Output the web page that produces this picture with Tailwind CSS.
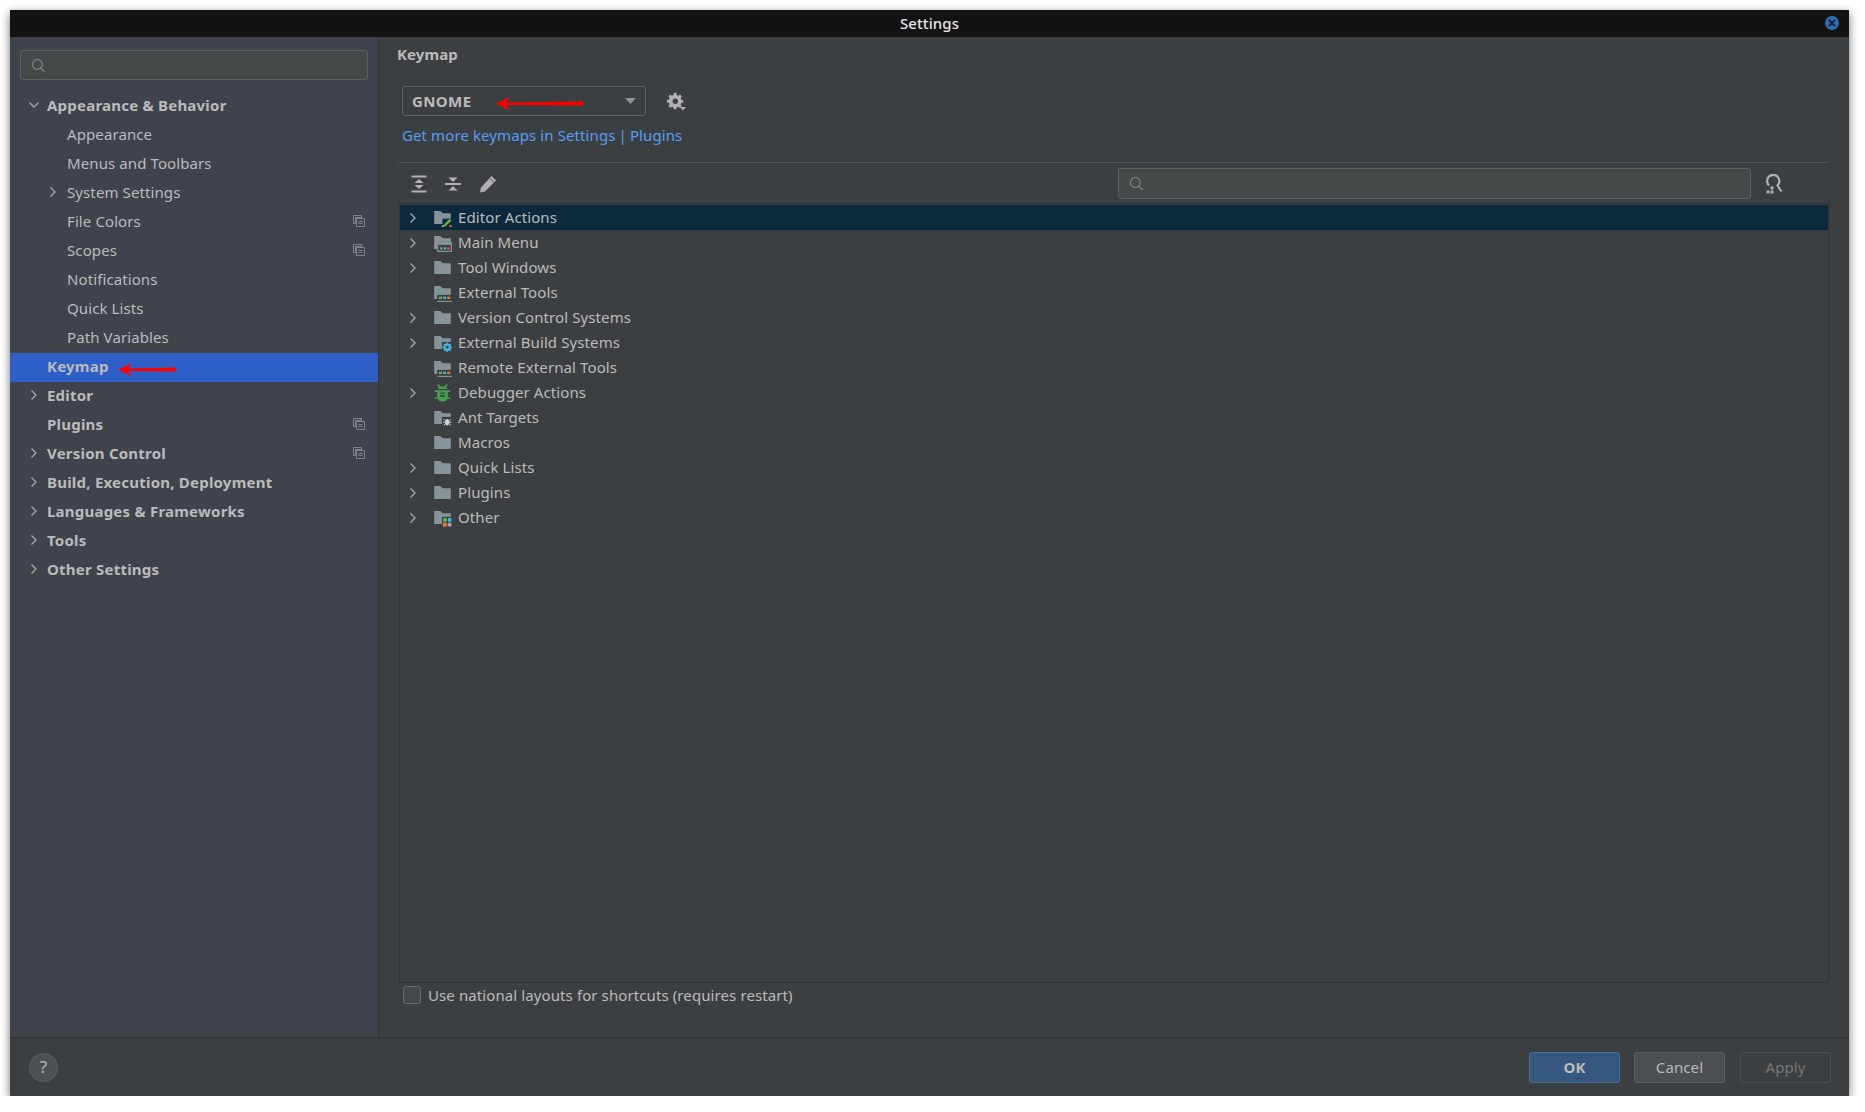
<!DOCTYPE html>
<html lang="en">
<head>
    <meta charset="UTF-8">
    <title>Settings</title>
    <script src="https://cdn.jsdelivr.net/npm/@tailwindcss/browser@4"></script>
</head>
<body class="bg-white font-['Noto_Sans',sans-serif] text-[15px] tracking-[0.1px] text-[#bbbbbb]">

    <!-- shared icons -->
    <svg class="hidden">
        <symbol id="right" viewBox="0 0 12 12"><path d="M3.5 1.5 8 6l-4.5 4.5" fill="none" stroke="#a9a9a9" stroke-width="1.3"/></symbol>
        <symbol id="down" viewBox="0 0 12 12"><path d="M1.5 3.5 6 8l4.5-4.5" fill="none" stroke="#a9a9a9" stroke-width="1.3"/></symbol>
        <symbol id="folder" viewBox="0 0 16 16"><path d="M1 2.5h5.2l2 2H15V13.5H1z" fill="#87939a"/></symbol>
        <symbol id="search" viewBox="0 0 16 16"><circle cx="6.8" cy="6.8" r="5.2" fill="none" stroke="#8a8d8f" stroke-width="1.1"/><path d="m10.5 10.8 4 4" stroke="#8a8d8f" stroke-width="1.3"/></symbol>
        <symbol id="copy" viewBox="0 0 12 12"><path d="M.5.5h8v2h-6v6h-2z" fill="none" stroke="#7f8589"/><path d="M3.5 3.5h8v8h-8z" fill="none" stroke="#7f8589"/><path d="M5.5 6.5h4M5.5 8.5h4" stroke="#7f8589"/></symbol>
    </svg>

    <div class="flex flex-col ml-[10px] mt-[10px] w-[1839px] h-[1086px] bg-[#3c3f41] shadow-[0_3px_9px_rgba(0,0,0,0.55)]">

        <!-- title bar -->
        <div class="relative flex items-center justify-center h-[27px] bg-[#131313] text-[#e4e4e4] text-[15px] font-medium">
            Settings
            <div class="absolute right-[10px] top-[6px] flex items-center justify-center w-[14px] h-[14px] rounded-full bg-[#2f6db5]">
                <svg class="w-[8px] h-[8px]" viewBox="0 0 8 8"><path d="m1 1 6 6M7 1 1 7" stroke="#15233a" stroke-width="1.8"/></svg>
            </div>
        </div>

        <div class="flex flex-1 min-h-0">

            <!-- sidebar -->
            <div class="w-[369px] shrink-0 bg-[#3e434c] border-r border-[#323232]">
                <div class="flex items-center mx-[10px] mt-[13px] mb-[12px] h-[30px] px-[10px] rounded-[3px] bg-[#45494a] border border-[#5e6163]">
                    <svg class="w-[15px] h-[15px]"><use href="#search"/></svg>
                </div>

                <div class="flex items-center h-[29px] pb-[3px] pl-[18px] font-bold tracking-[0.22px]"><svg class="w-[12px] h-[12px] mr-[7px]"><use href="#down"/></svg>Appearance &amp; Behavior</div>
                <div class="flex items-center h-[29px] pb-[3px] pl-[57px]">Appearance</div>
                <div class="flex items-center h-[29px] pb-[3px] pl-[57px]">Menus and Toolbars</div>
                <div class="flex items-center h-[29px] pb-[3px] pl-[37px]"><svg class="w-[12px] h-[12px] mr-[8px]"><use href="#right"/></svg>System Settings</div>
                <div class="flex items-center h-[29px] pb-[3px] pl-[57px] pr-[13px]">File Colors<svg class="w-[12px] h-[12px] ml-auto"><use href="#copy"/></svg></div>
                <div class="flex items-center h-[29px] pb-[3px] pl-[57px] pr-[13px]">Scopes<svg class="w-[12px] h-[12px] ml-auto"><use href="#copy"/></svg></div>
                <div class="flex items-center h-[29px] pb-[3px] pl-[57px]">Notifications</div>
                <div class="flex items-center h-[29px] pb-[3px] pl-[57px]">Quick Lists</div>
                <div class="flex items-center h-[29px] pb-[3px] pl-[57px]">Path Variables</div>
                <div class="relative flex items-center h-[29px] pb-[3px] pl-[37px] font-bold tracking-[0.22px] bg-[#2d5fc6]">
                    Keymap
                    <svg class="absolute left-[108px] top-[10px] w-[58px] h-[13px]" viewBox="0 0 58 13"><path d="M0 6.5 14 0l-4 5.5 48-1v4l-48-.5 4 5.5z" fill="#ff0000"/></svg>
                </div>
                <div class="flex items-center h-[29px] pb-[3px] pl-[18px] font-bold tracking-[0.22px]"><svg class="w-[12px] h-[12px] mr-[7px]"><use href="#right"/></svg>Editor</div>
                <div class="flex items-center h-[29px] pb-[3px] pl-[37px] pr-[13px] font-bold tracking-[0.22px]">Plugins<svg class="w-[12px] h-[12px] ml-auto"><use href="#copy"/></svg></div>
                <div class="flex items-center h-[29px] pb-[3px] pl-[18px] pr-[13px] font-bold tracking-[0.22px]"><svg class="w-[12px] h-[12px] mr-[7px]"><use href="#right"/></svg>Version Control<svg class="w-[12px] h-[12px] ml-auto"><use href="#copy"/></svg></div>
                <div class="flex items-center h-[29px] pb-[3px] pl-[18px] font-bold tracking-[0.22px]"><svg class="w-[12px] h-[12px] mr-[7px]"><use href="#right"/></svg>Build, Execution, Deployment</div>
                <div class="flex items-center h-[29px] pb-[3px] pl-[18px] font-bold tracking-[0.22px]"><svg class="w-[12px] h-[12px] mr-[7px]"><use href="#right"/></svg>Languages &amp; Frameworks</div>
                <div class="flex items-center h-[29px] pb-[3px] pl-[18px] font-bold tracking-[0.22px]"><svg class="w-[12px] h-[12px] mr-[7px]"><use href="#right"/></svg>Tools</div>
                <div class="flex items-center h-[29px] pb-[3px] pl-[18px] font-bold tracking-[0.22px]"><svg class="w-[12px] h-[12px] mr-[7px]"><use href="#right"/></svg>Other Settings</div>
            </div>

            <!-- main panel -->
            <div class="flex flex-col flex-1 min-w-0 pr-[20px]">
                <div class="flex items-center h-[38px] pb-[3px] pl-[18px] font-bold">Keymap</div>

                <div class="flex items-center mt-[11px] pl-[23px]">
                    <div class="relative flex items-center w-[244px] h-[30px] pl-[9px] pr-[9px] rounded-[3px] border border-[#5e6163] font-bold tracking-[0.4px]">
                        GNOME
                        <svg class="absolute left-[93px] top-[10px] w-[87px] h-[13px]" viewBox="0 0 87 13"><path d="M0 6.5 14 0l-4 5.5 77-1v4l-77-.5 4 5.5z" fill="#ff0000"/></svg>
                        <svg class="ml-auto w-[11px] h-[6px]" viewBox="0 0 11 6"><path d="M0 0h11L5.5 6z" fill="#8f9193"/></svg>
                    </div>
                    <svg class="ml-[21px] mt-[2px] w-[20px] h-[20px]" viewBox="0 0 20 20">
                        <path d="M8 1h3l.5 2.500 1.700.8L15.400 3l2 2.100-1.300 2.100.7 1.800 2.200.5v3l-2.300.5-.7 1.700 1.300 2-2.100 2-2.100-1.300-1.700.7-.5 2.200H8l-.5-2.300-1.700-.7-2 1.300-2.100-2 1.300-2.100-.7-1.800L0 12.500v-3l2.300-.5.7-1.800-1.300-2L3.800 3l2 1.300 1.700-.8z" transform="scale(.85)" fill="#afb1b3"/>
                        <circle cx="8.300" cy="9.300" r="2.700" fill="#3c3f41"/>
                        <path d="M13 15h6l-3 3.500z" fill="#afb1b3"/>
                    </svg>
                </div>

                <div class="flex items-center h-[22px] mt-[9px] pb-px pl-[23px] text-[#589df6]">
                    <span>Get more keymaps in Settings</span><span class="mx-[3px]">|</span><span>Plugins</span>
                </div>

                <div class="h-px mt-[15px] ml-[19px] bg-[#515355]"></div>

                <!-- toolbar -->
                <div class="flex items-center h-[40px] pt-px pl-[31px] pr-[45px]">
                    <svg class="w-[18px] h-[18px]" viewBox="0 0 18 18"><path d="M1.500 1.500h15M1.500 16.500h15" stroke="#afb1b3" stroke-width="2"/><path d="M9 4l4.500 4h-9zM9 14l4.500-4h-9z" fill="#afb1b3"/></svg>
                    <svg class="ml-[16px] w-[18px] h-[18px]" viewBox="0 0 18 18"><path d="M1 9h16" stroke="#afb1b3" stroke-width="2"/><path d="M9 7 4.500 2.500h9zM9 11l4.500 4.500h-9z" fill="#afb1b3"/></svg>
                    <svg class="ml-[17px] w-[18px] h-[18px]" viewBox="0 0 18 18"><path d="M12.500 1 17 5.500 6 16.500l-5 1 1-5z" fill="#afb1b3"/><path d="m10.800 3.500 4 4" stroke="#3c3f41" stroke-width=".8"/></svg>
                    <div class="flex items-center ml-auto w-[633px] h-[31px] pl-[10px] rounded-[3px] bg-[#45494a] border border-[#5e6163]">
                        <svg class="w-[15px] h-[15px]"><use href="#search"/></svg>
                    </div>
                    <svg class="ml-[13px] w-[20px] h-[20px]" viewBox="0 0 20 20"><path d="M5 11.500A6.200 6.200 0 1 1 13.500 11.500l4 6" fill="none" stroke="#afb1b3" stroke-width="2.200"/><path d="M6.500 12.500h3v3h-3zM2.500 16.500h3v3h-3zM6.500 16.500h3v3h-3z" fill="#afb1b3"/></svg>
                </div>

                <!-- action tree -->
                <div class="flex-1 min-h-0 ml-[20px] pt-px border border-[#323232]">
                    <div class="flex items-center h-[25px] pl-[7px] bg-[#0d293e]">
                        <svg class="w-[12px] h-[12px]"><use href="#right"/></svg>
                        <svg class="ml-[14px] w-[19px] h-[19px]" viewBox="0 0 16 16"><use href="#folder"/><path d="M8 9h8v7H8z" fill="#0d293e"/><path d="m9 14 5-5 1.500 1.500-5 5z" fill="#62b543"/><path d="M7.500 14.500h2V16h-2z" fill="#d9a343"/><path d="M13.500 14.500H16V16h-2.500z" fill="#e05555"/></svg>
                        <span class="ml-[6px]">Editor Actions</span>
                    </div>
                    <div class="flex items-center h-[25px] pl-[7px]">
                        <svg class="w-[12px] h-[12px]"><use href="#right"/></svg>
                        <svg class="ml-[14px] w-[19px] h-[19px]" viewBox="0 0 16 16"><use href="#folder"/><path d="M3.500 7.500h12.500v8.500H3.500z" fill="#3c3f41"/><path d="M4 8h11.500v7.500H4z" fill="none" stroke="#87939a"/><path d="M4 8h11.500v2H4z" fill="#87939a"/><path d="M6 12h2v2H6z" fill="#62b543"/><path d="M9 12h2v2H9z" fill="#40b6e0"/><path d="M12 12h2v2h-2z" fill="#e05555"/></svg>
                        <span class="ml-[6px]">Main Menu</span>
                    </div>
                    <div class="flex items-center h-[25px] pl-[7px]">
                        <svg class="w-[12px] h-[12px]"><use href="#right"/></svg>
                        <svg class="ml-[14px] w-[19px] h-[19px]"><use href="#folder"/></svg>
                        <span class="ml-[6px]">Tool Windows</span>
                    </div>
                    <div class="flex items-center h-[25px] pl-[33px]">
                        <svg class="w-[19px] h-[19px]" viewBox="0 0 16 16"><use href="#folder"/><path d="M3.500 10h12.500v6H3.500z" fill="#3c3f41"/><path d="M5 11.500h2.500v2H5z" fill="#62b543"/><path d="M8.500 11.500H11v2H8.500z" fill="#40b6e0"/><path d="M12 11.500h2.500v2H12z" fill="#e0763f"/><path d="M3.500 15h12.500v1H3.500z" fill="#87939a"/></svg>
                        <span class="ml-[6px]">External Tools</span>
                    </div>
                    <div class="flex items-center h-[25px] pl-[7px]">
                        <svg class="w-[12px] h-[12px]"><use href="#right"/></svg>
                        <svg class="ml-[14px] w-[19px] h-[19px]"><use href="#folder"/></svg>
                        <span class="ml-[6px]">Version Control Systems</span>
                    </div>
                    <div class="flex items-center h-[25px] pl-[7px]">
                        <svg class="w-[12px] h-[12px]"><use href="#right"/></svg>
                        <svg class="ml-[14px] w-[19px] h-[19px]" viewBox="0 0 16 16"><use href="#folder"/><path d="M7.500 7.500H16V16H7.500z" fill="#3c3f41"/><circle cx="12" cy="12" r="2.300" fill="none" stroke="#40b6e0" stroke-width="1.800"/><path d="M12 8v8M8 12h8M9.200 9.200l5.600 5.600M14.800 9.200l-5.600 5.600" stroke="#40b6e0" stroke-width="1.200"/><circle cx="12" cy="12" r="1.200" fill="#3c3f41"/></svg>
                        <span class="ml-[6px]">External Build Systems</span>
                    </div>
                    <div class="flex items-center h-[25px] pl-[33px]">
                        <svg class="w-[19px] h-[19px]" viewBox="0 0 16 16"><use href="#folder"/><path d="M3.500 10h12.500v6H3.500z" fill="#3c3f41"/><path d="M5 11.500h2.500v2H5z" fill="#62b543"/><path d="M8.500 11.500H11v2H8.500z" fill="#40b6e0"/><path d="M12 11.500h2.500v2H12z" fill="#e0763f"/><path d="M3.500 15h12.500v1H3.500z" fill="#87939a"/></svg>
                        <span class="ml-[6px]">Remote External Tools</span>
                    </div>
                    <div class="flex items-center h-[25px] pl-[7px]">
                        <svg class="w-[12px] h-[12px]"><use href="#right"/></svg>
                        <svg class="ml-[14px] w-[19px] h-[19px]" viewBox="0 0 16 16"><path d="M4.500.8 6.500 3h3l2-2.200 1 1-1.500 1.700 1 1.500H4l1-1.500L3.500 1.800z" fill="#499c54"/><path d="M1.500 6h13v1.500h-2V12h2v1.500l-2.300-.2A4 4 0 0 1 8 15.500a4 4 0 0 1-4.200-2.200l-2.300.2V12h2V7.500h-2z" fill="#499c54"/><path d="M6 8.500h4M6 11h4" stroke="#3c3f41" stroke-width="1.200"/></svg>
                        <span class="ml-[6px]">Debugger Actions</span>
                    </div>
                    <div class="flex items-center h-[25px] pl-[33px]">
                        <svg class="w-[19px] h-[19px]" viewBox="0 0 16 16"><use href="#folder"/><path d="M7.500 7.500H16V16H7.500z" fill="#3c3f41"/><path d="M9 9.500l6 5M15 9.500l-6 5M8.500 12h7" stroke="#d4d6d8" stroke-width=".8"/><ellipse cx="12" cy="12" rx="1.500" ry="2.800" fill="#d4d6d8"/></svg>
                        <span class="ml-[6px]">Ant Targets</span>
                    </div>
                    <div class="flex items-center h-[25px] pl-[33px]">
                        <svg class="w-[19px] h-[19px]"><use href="#folder"/></svg>
                        <span class="ml-[6px]">Macros</span>
                    </div>
                    <div class="flex items-center h-[25px] pl-[7px]">
                        <svg class="w-[12px] h-[12px]"><use href="#right"/></svg>
                        <svg class="ml-[14px] w-[19px] h-[19px]"><use href="#folder"/></svg>
                        <span class="ml-[6px]">Quick Lists</span>
                    </div>
                    <div class="flex items-center h-[25px] pl-[7px]">
                        <svg class="w-[12px] h-[12px]"><use href="#right"/></svg>
                        <svg class="ml-[14px] w-[19px] h-[19px]"><use href="#folder"/></svg>
                        <span class="ml-[6px]">Plugins</span>
                    </div>
                    <div class="flex items-center h-[25px] pl-[7px]">
                        <svg class="w-[12px] h-[12px]"><use href="#right"/></svg>
                        <svg class="ml-[14px] w-[19px] h-[19px]" viewBox="0 0 16 16"><use href="#folder"/><path d="M7.500 7.500H16V16H7.500z" fill="#3c3f41"/><circle cx="10" cy="10" r="1.700" fill="#62b543"/><circle cx="14" cy="10" r="1.700" fill="#40b6e0"/><path d="M8.300 12.300h3.400v3.400H8.300z" fill="#e0763f"/><circle cx="14" cy="14" r="1.700" fill="#9aa7b0"/></svg>
                        <span class="ml-[6px]">Other</span>
                    </div>
                </div>

                <div class="flex items-start h-[54px] pt-[3px] pl-[24px]">
                    <div class="w-[18px] h-[18px] rounded-[3px] bg-[#43494a] border border-[#6b6b6b]"></div>
                    <span class="ml-[7px] leading-[18px]">Use national layouts for shortcuts (requires restart)</span>
                </div>
            </div>
        </div>

        <!-- footer -->
        <div class="flex items-center h-[59px] pl-[19px] pr-[18px] border-t border-[#323232]">
            <div class="flex items-center justify-center w-[29px] h-[29px] rounded-full bg-[#4c5052] border border-[#5e6060] text-[17px] text-[#bbbbbb]">?</div>
            <button class="ml-auto w-[91px] h-[31px] rounded-[3px] bg-[#365880] border border-[#4c708c] font-bold">OK</button>
            <button class="ml-[14px] w-[91px] h-[31px] rounded-[3px] bg-[#4c5052] border border-[#5e6060]">Cancel</button>
            <button class="ml-[15px] w-[91px] h-[31px] rounded-[3px] border border-[#4c5052] text-[#777777]">Apply</button>
        </div>
    </div>
</body>
</html>
